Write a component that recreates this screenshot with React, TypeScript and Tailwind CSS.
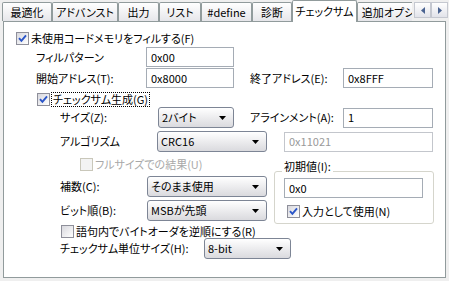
import React from "react";

const tabs = [
  { label: "最適化", w: "w-[50px]" },
  { label: "アドバンスト", w: "w-[66px]" },
  { label: "出力", w: "w-[41px]" },
  { label: "リスト", w: "w-[42px]" },
  { label: "#define", w: "w-[51px]" },
  { label: "診断", w: "w-[40px]" },
  { label: "チェックサム", w: "w-[65px]", active: true },
  { label: "追加オプション", w: "w-[80px]" },
];

const CheckBox = ({ checked = false, disabled = false }: { checked?: boolean; disabled?: boolean }) => (
  <span
    className={
      disabled
        ? "flex h-[13px] w-[13px] shrink-0 items-center justify-center border border-[#c9c7ba] bg-[#f3f3f3]"
        : "flex h-[13px] w-[13px] shrink-0 items-center justify-center border border-[#8e8f9a] bg-linear-to-br from-[#d8d8de] to-white"
    }
  >
    {checked && (
      <svg width="9" height="9" viewBox="0 0 9 9">
        <path d="M1 4.2 L3.4 6.8 L8 1.4" stroke="#2a55c8" strokeWidth="1.9" fill="none" />
      </svg>
    )}
  </span>
);

const TextBox = ({ value, className, disabled = false }: { value: string; className: string; disabled?: boolean }) => (
  <div
    className={
      "flex h-[20px] shrink-0 items-center border bg-white pl-[4px] " +
      (disabled ? "border-[#c3c6cc] text-[#9a9a9a] " : "border-[#a5acb5] ") +
      className
    }
  >
    {value}
  </div>
);

const DropDown = ({ value, className }: { value: string; className: string }) => (
  <div
    className={
      "flex h-[21px] shrink-0 items-center justify-between rounded-[3px] border border-[#7d8595] bg-linear-to-b from-white to-[#dadade] pl-[3px] pr-[7px] " +
      className
    }
  >
    <span>{value}</span>
    <svg width="7" height="4" viewBox="0 0 7 4">
      <path d="M0 0 H7 L3.5 4 Z" fill="#000" />
    </svg>
  </div>
);

const ScrollButton = ({ dir }: { dir: "left" | "right" }) => (
  <div className="flex h-[16px] w-[17px] items-center justify-center border border-[#c5c8d0] bg-linear-to-b from-white to-[#e2e3ea]">
    <svg width="4" height="7" viewBox="0 0 4 7">
      <path d={dir === "left" ? "M4 0 V7 L0 3.5 Z" : "M0 0 V7 L4 3.5 Z"} fill="#4a6391" />
    </svg>
  </div>
);

export default function App() {
  return (
    <div className="h-[281px] w-[449px] overflow-hidden whitespace-nowrap bg-[#efefef] font-['Noto_Sans_CJK_JP',sans-serif] text-[11px] leading-[13px] text-black [font-feature-settings:'palt']">
      {/* Tab strip */}
      <div className="relative z-10 flex h-[21px]">
        <div className="flex h-full w-[412px] items-end overflow-x-clip pl-[2px]">
          {tabs.map((t) =>
            t.active ? (
              <div
                key={t.label}
                className={"-mb-px flex h-[22px] shrink-0 items-center justify-center rounded-t-[2px] border-x border-t border-[#919b9c] bg-white pb-[1px] " + t.w}
              >
                {t.label}
              </div>
            ) : (
              <div
                key={t.label}
                className={"flex h-[19px] shrink-0 items-center justify-center rounded-t-[2px] border-x border-t border-[#919b9c] bg-linear-to-b from-white to-[#e6e6ea] " + t.w}
              >
                {t.label}
              </div>
            )
          )}
        </div>
        <div className="ml-[2px] mt-[2px] flex">
          <ScrollButton dir="left" />
          <ScrollButton dir="right" />
        </div>
      </div>

      {/* Panel */}
      <div className="ml-[3px] flex h-[257px] w-[443px] flex-col border border-[#919b9c] bg-white pt-[8px]">
        <div className="flex h-[16px] items-center pl-[12px]">
          <CheckBox checked />
          <span className="ml-[2px]">未使用コードメモリをフィルする(F)</span>
        </div>

        <div className="mt-[1px] flex h-[20px] items-center pl-[32px]">
          <span className="w-[110px]">フィルパターン</span>
          <TextBox value="0x00" className="w-[88px]" />
        </div>

        <div className="mt-[1px] flex h-[20px] items-center pl-[32px]">
          <span className="w-[110px]">開始アドレス(T):</span>
          <TextBox value="0x8000" className="w-[88px]" />
          <span className="ml-[16px] w-[93px]">終了アドレス(E):</span>
          <TextBox value="0x8FFF" className="w-[90px]" />
        </div>

        <div className="mt-[3px] flex h-[16px] items-center pl-[33px]">
          <CheckBox checked />
          <span className="ml-[1px] border border-dotted border-black px-[1px] leading-[13px]">チェックサム生成(G)</span>
        </div>

        <div className="flex h-[21px] items-center pl-[56px]">
          <span className="w-[98px]">サイズ(Z):</span>
          <DropDown value="2バイト" className="w-[76px]" />
          <span className="ml-[16px] w-[93px]">アラインメント(A):</span>
          <TextBox value="1" className="w-[90px]" />
        </div>

        <div className="mt-[3px] flex h-[21px] items-center pl-[56px]">
          <span className="w-[97px]">アルゴリズム</span>
          <DropDown value="CRC16" className="w-[110px]" />
          <TextBox value="0x11021" className="ml-[17px] w-[149px]" disabled />
        </div>

        <div className="mt-[4px] flex pl-[56px]">
          <div className="flex w-[207px] flex-col">
            <div className="flex h-[16px] items-center pl-[20px]">
              <CheckBox disabled />
              <span className="ml-[2px] text-[#a8a8a8]">フルサイズでの結果(U)</span>
            </div>
            <div className="mt-[4px] flex h-[21px] items-center">
              <span className="w-[87px]">補数(C):</span>
              <DropDown value="そのまま使用" className="w-[120px]" />
            </div>
            <div className="mt-[3px] flex h-[21px] items-center">
              <span className="w-[87px]">ビット順(B):</span>
              <DropDown value="MSBが先頭" className="w-[120px]" />
            </div>
          </div>

          <div className="ml-[7px] mt-[15px] flex h-[53px] w-[160px] flex-col rounded-[3px] border border-[#d5d5cc]">
            <span className="-mt-[12px] ml-[7px] w-fit bg-white px-[2px]">初期値(I):</span>
            <TextBox value="0x0" className="ml-[9px] mt-[5px] w-[139px]" />
            <div className="ml-[12px] mt-[5px] flex h-[16px] items-center">
              <CheckBox checked />
              <span className="ml-[2px]">入力として使用(N)</span>
            </div>
          </div>
        </div>

        <div className="flex h-[14px] items-center pl-[57px]">
          <CheckBox />
          <span className="ml-[2px]">語句内でバイトオーダを逆順にする(R)</span>
        </div>

        <div className="flex h-[21px] items-center pl-[56px]">
          <span className="w-[144px]">チェックサム単位サイズ(H):</span>
          <DropDown value="8-bit" className="w-[87px]" />
        </div>
      </div>
    </div>
  );
}
